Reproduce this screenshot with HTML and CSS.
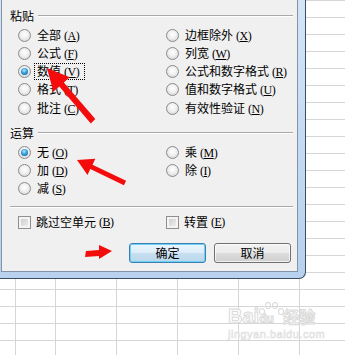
FILE: index.html
```html
<!DOCTYPE html>
<html lang="zh-CN">
<head>
	<meta charset="utf-8" />
	<title>选择性粘贴</title>
	<link rel="stylesheet" href="styles.css">
</head>
<body>
<div class="frame">
  <div class="panel">
    <div class="group-title"><span>粘贴</span><i class="rule"></i></div>
    <div class="options">
      <div class="opt"><span class="radio"></span><span class="txt">全部<span class="key">(<u>A</u>)</span></span></div>
      <div class="opt"><span class="radio"></span><span class="txt">边框除外<span class="key">(<u>X</u>)</span></span></div>
      <div class="opt"><span class="radio"></span><span class="txt">公式<span class="key">(<u>F</u>)</span></span></div>
      <div class="opt"><span class="radio"></span><span class="txt">列宽<span class="key">(<u>W</u>)</span></span></div>
      <div class="opt"><span class="radio on"></span><span class="txt focus">数值<span class="key">(<u>V</u>)</span></span></div>
      <div class="opt"><span class="radio"></span><span class="txt">公式和数字格式<span class="key">(<u>R</u>)</span></span></div>
      <div class="opt"><span class="radio"></span><span class="txt">格式<span class="key">(<u>T</u>)</span></span></div>
      <div class="opt"><span class="radio"></span><span class="txt">值和数字格式<span class="key">(<u>U</u>)</span></span></div>
      <div class="opt"><span class="radio"></span><span class="txt">批注<span class="key">(<u>C</u>)</span></span></div>
      <div class="opt"><span class="radio"></span><span class="txt">有效性验证<span class="key">(<u>N</u>)</span></span></div>
    </div>

    <div class="group-title second"><span>运算</span><i class="rule"></i></div>
    <div class="options">
      <div class="opt"><span class="radio on"></span><span class="txt">无<span class="key">(<u>O</u>)</span></span></div>
      <div class="opt"><span class="radio"></span><span class="txt">乘<span class="key">(<u>M</u>)</span></span></div>
      <div class="opt"><span class="radio"></span><span class="txt">加<span class="key">(<u>D</u>)</span></span></div>
      <div class="opt"><span class="radio"></span><span class="txt">除<span class="key">(<u>I</u>)</span></span></div>
      <div class="opt"><span class="radio"></span><span class="txt">减<span class="key">(<u>S</u>)</span></span></div>
    </div>

    <div class="sep"></div>

    <div class="checks">
      <div class="opt"><span class="check"></span>跳过空单元<span class="key">(<u>B</u>)</span></div>
      <div class="opt"><span class="check"></span>转置<span class="key">(<u>E</u>)</span></div>
    </div>

    <div class="actions">
      <div class="btn default">确定</div>
      <div class="btn">取消</div>
    </div>
  </div>
</div>

<div class="watermark">
  <span class="wm-big">Bai</span><span class="paw"><b></b><b></b><b></b><b></b><em>du</em></span><span class="wm-cn">经验</span>
  <div class="wm-url">jingyan.baidu.com</div>
</div>

<svg class="marks" width="345" height="355" viewBox="0 0 345 355">
  <polygon fill="#f40c0c" points="47,68 69.8,77.2 63.8,82.5 95.3,119 90.8,123.5 59.3,86.5 53.3,91.8"/>
  <polygon fill="#f40c0c" points="77,160 95.3,158.8 92.5,164.7 126.1,180.8 123.9,185.2 90.3,169.1 87.5,175"/>
  <polygon fill="#f40c0c" points="112,251 99,245 99,250 86,251 85,257 99,256 99,259"/>
</svg>
</body>
</html>
```
FILE: styles.css
```css
* {
  box-sizing: border-box;
}

body {
  margin: 0;
  width: 345px;
  height: 355px;
  overflow: hidden;
  position: relative;
  background-color: #fff;
  background-image:
    repeating-linear-gradient(180deg, #d6d6d6 0 1px, transparent 1px 17px),
    repeating-linear-gradient(90deg, #d6d6d6 0 1px, transparent 1px 61px);
  background-position: 0 0, 55px 0;
  font-family: "Noto Sans CJK SC", "Liberation Sans", sans-serif;
  font-size: 12px;
  color: #000;
}

/* dialog window frame */
.frame {
  width: 306px;
  height: 279px;
  padding: 0 7px 6px 1px;
  background: linear-gradient(180deg, #d3e5f7, #b7d1ee);
  border-right: 1px solid #3d4c5e;
  border-bottom: 1px solid #3d4c5e;
  border-bottom-right-radius: 7px;
}

.panel {
  height: 100%;
  background: #f0f0f0;
  border: 1px solid #8494a6;
  border-top: 0;
  padding: 10px 4px 0 8px;
}

.group-title {
  display: flex;
  align-items: center;
  gap: 4px;
  height: 12px;
  line-height: 12px;
}

.group-title.second {
  margin-top: 10px;
}

.rule {
  flex: 1;
  height: 2px;
  border-top: 1px solid #a9a9a9;
  border-bottom: 1px solid #fff;
}

.options {
  display: grid;
  grid-template-columns: 148px 1fr;
  grid-auto-rows: 18.25px;
  margin-top: 4px;
  padding-left: 8px;
}

.opt {
  display: flex;
  align-items: center;
  white-space: nowrap;
}

.txt {
  border: 1px dotted transparent;
  padding: 1px 5px 1px 2px;
  line-height: 12px;
}

.txt.focus {
  border-color: #000;
}

.key {
  font-family: "Liberation Serif", serif;
  font-size: 12px;
  letter-spacing: -0.5px;
  margin-left: 3px;
}

.radio {
  position: relative;
  flex: none;
  width: 13px;
  height: 13px;
  margin-right: 3px;
  border-radius: 50%;
  border: 1px solid #8b8b8b;
  background: radial-gradient(circle at 50% 40%, #fff 0, #f2f2f2 40%, #cfcfcf 100%);
}

.radio.on:after {
  content: "";
  position: absolute;
  left: 2px;
  top: 2px;
  width: 7px;
  height: 7px;
  border-radius: 50%;
  background: radial-gradient(circle at 45% 35%, #b7ecff 0, #3da5e0 40%, #0a4d86 100%);
}

.sep {
  margin-top: 8px;
  height: 2px;
  border-top: 1px solid #a9a9a9;
  border-bottom: 1px solid #fff;
}

.checks {
  display: grid;
  grid-template-columns: 148px 1fr;
  height: 14px;
  margin-top: 7px;
  padding-left: 8px;
  line-height: 12px;
}

.check {
  flex: none;
  width: 13px;
  height: 13px;
  margin-right: 5px;
  border: 1px solid #8e8f8f;
  background: linear-gradient(135deg, #c6c6c6, #f6f6f6);
  box-shadow: inset 0 0 0 2px #f4f4f4;
}

.actions {
  display: flex;
  justify-content: flex-end;
  gap: 8px;
  margin-top: 14px;
  padding-right: 2px;
}

.btn {
  width: 77px;
  height: 20px;
  display: flex;
  align-items: center;
  justify-content: center;
  line-height: 12px;
  border: 1px solid #707070;
  border-radius: 3px;
  background: linear-gradient(180deg, #f2f2f2 0, #ebebeb 50%, #dddddd 50%, #cfcfcf 100%);
  box-shadow: inset 0 0 0 1px rgba(255, 255, 255, .7);
}

.btn.default {
  border-color: #3c7fb1;
  background: linear-gradient(180deg, #eaf6fd 0, #dcecf7 50%, #c8e0f0 50%, #b9d6ea 100%);
  box-shadow: inset 0 0 0 1px #6fd0f5;
}

/* faint site watermark */
.watermark {
  position: absolute;
  left: 228px;
  top: 304px;
  color: #fff;
  font-family: "Liberation Sans", sans-serif;
  -webkit-text-stroke: 1px #d9d9d9;
}

.wm-big {
  font-size: 20px;
  font-weight: bold;
}

.paw {
  position: relative;
  display: inline-block;
  width: 24px;
  font-size: 12px;
  font-weight: bold;
}

.paw em {
  font-style: normal;
}

.paw b {
  position: absolute;
  width: 6px;
  height: 7px;
  border: 1px solid #d9d9d9;
  border-radius: 50%;
  top: -10px;
}

.paw b:nth-child(1) { left: 0; top: -4px; }
.paw b:nth-child(2) { left: 6px; top: -10px; }
.paw b:nth-child(3) { left: 13px; top: -10px; }
.paw b:nth-child(4) { left: 19px; top: -4px; }

.wm-cn {
  font-family: "Noto Sans CJK SC", sans-serif;
  font-size: 16px;
  font-weight: bold;
}

.wm-url {
  font-size: 11px;
  letter-spacing: .5px;
  -webkit-text-stroke: .6px #dcdcdc;
}

.marks {
  position: absolute;
  left: 0;
  top: 0;
  pointer-events: none;
}
```
